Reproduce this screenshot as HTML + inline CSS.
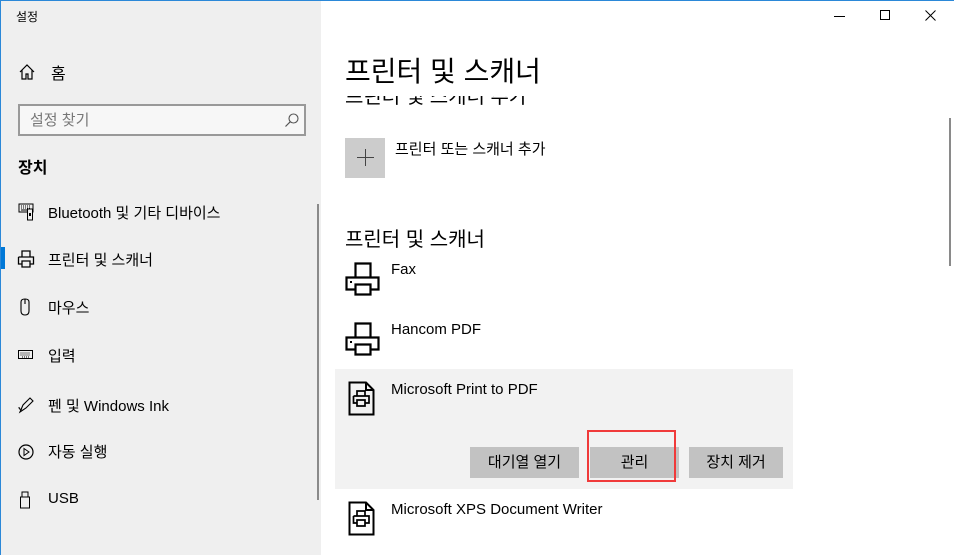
<!DOCTYPE html>
<html><head><meta charset="utf-8">
<style>
*{margin:0;padding:0;box-sizing:border-box}
body{width:954px;height:555px;overflow:hidden;background:#fff;font-family:"Liberation Sans","Noto Sans CJK KR",sans-serif;color:#000;position:relative}
.a{position:absolute;white-space:nowrap}
#side{position:absolute;left:0;top:0;width:321px;height:555px;background:#efefef;border-left:1px solid #2b88d8}
#topline{position:absolute;left:0;top:0;width:954px;height:1px;background:#2b88d8}
.nav{font-size:15px;color:#000}
.btn{position:absolute;background:#c2c2c2;font-size:15px;text-align:center;line-height:31px;height:31px}
</style></head><body>
<div id="side">
<div class="a" style="left:15px;top:8px;font-size:12px">설정</div>
<svg class="a" style="left:17px;top:63px" width="18" height="18" viewBox="0 0 18 18"><path d="M2 9 L9 2 L16 9 M4 7 V16 H8 V11 H10 V16 H14 V7" fill="none" stroke="#000" stroke-width="1.2"/></svg>
<div class="a nav" style="left:50px;top:60px;font-size:16px">홈</div>
<div class="a" style="left:17px;top:104px;width:288px;height:32px;border:2px solid #999;background:#f7f7f7"></div>
<div class="a" style="left:29px;top:109px;font-size:15px;color:#777">설정 찾기</div>
<svg class="a" style="left:283px;top:112px" width="16" height="16" viewBox="0 0 16 16"><circle cx="9.5" cy="6.5" r="4.5" fill="none" stroke="#555" stroke-width="1.1"/><path d="M6.3 9.7 L1.5 14.5" stroke="#555" stroke-width="1.2"/></svg>
<div class="a" style="left:17px;top:154px;font-size:16px;font-weight:bold">장치</div>
<svg class="a" style="left:17px;top:203px" width="18" height="18" viewBox="0 0 18 18"><rect x="1" y="1" width="14" height="8" fill="none" stroke="#000"/><path d="M3 3h1M5 3h1M7 3h1M9 3h1M11 3h1M3 5h1M5 5h1M7 5h1M9 5h1M11 5h1M3 7h8" stroke="#000"/><rect x="9.5" y="6" width="5" height="11" fill="#efefef" stroke="#000"/><rect x="11" y="10" width="2" height="3" fill="#000"/></svg>
<div class="a nav" style="left:47px;top:202px">Bluetooth 및 기타 디바이스</div>
<div class="a" style="left:0;top:247px;width:4px;height:22px;background:#0078d7"></div>
<svg class="a" style="left:16px;top:249px" width="20" height="20" viewBox="0 0 20 20"><path d="M5 8V2H13V8M1.5 8H16.5V15H13M5 15H1.5V8M5 12H13V18H5Z" fill="none" stroke="#000" stroke-width="1.3"/></svg>
<div class="a nav" style="left:47px;top:249px">프린터 및 스캐너</div>
<svg class="a" style="left:17px;top:298px" width="14" height="20" viewBox="0 0 14 20"><path d="M3 4 Q3 1 7 1 Q11 1 11 4 V13 Q11 17 7 17 Q3 17 3 13 Z M7 1 V6" fill="none" stroke="#000" stroke-width="1.1"/></svg>
<div class="a nav" style="left:47px;top:297px">마우스</div>
<svg class="a" style="left:17px;top:349px" width="16" height="12" viewBox="0 0 16 12"><rect x="0.5" y="1.5" width="14" height="8" fill="none" stroke="#000"/><path d="M2.5 4h10M2.5 6h10M4 8h7" stroke="#000" stroke-dasharray="1 1"/></svg>
<div class="a nav" style="left:47px;top:345px">입력</div>
<svg class="a" style="left:16px;top:396px" width="18" height="18" viewBox="0 0 18 18"><path d="M3 16 L6 9 L13 2 L16 5 L9 12 Z M5 13 Q2 14 2 11" fill="none" stroke="#000" stroke-width="1.1"/></svg>
<div class="a nav" style="left:47px;top:395px">펜 및 Windows Ink</div>
<svg class="a" style="left:16px;top:443px" width="18" height="18" viewBox="0 0 18 18"><circle cx="9" cy="9" r="7" fill="none" stroke="#000" stroke-width="1.2"/><path d="M7 5.5 L12 9 L7 12.5 Z" fill="none" stroke="#000"/></svg>
<div class="a nav" style="left:47px;top:441px">자동 실행</div>
<svg class="a" style="left:18px;top:491px" width="12" height="18" viewBox="0 0 12 18"><rect x="3" y="1" width="6" height="5" fill="none" stroke="#000"/><rect x="1.5" y="6" width="9" height="11" fill="none" stroke="#000"/></svg>
<div class="a nav" style="left:47px;top:490px">USB</div>
<div class="a" style="left:316px;top:204px;width:2px;height:296px;background:#8a8a8a"></div>
</div>
<div id="topline"></div>
<div class="a" style="left:834px;top:16px;width:11px;height:1px;background:#000"></div>
<div class="a" style="left:880px;top:10px;width:10px;height:10px;border:1px solid #000"></div>
<svg class="a" style="left:925px;top:10px" width="11" height="11"><path d="M0.5 0.5L10.5 10.5M10.5 0.5L0.5 10.5" stroke="#000"/></svg>
<div class="a" style="left:949px;top:118px;width:2px;height:148px;background:#8a8a8a"></div>
<div class="a" style="left:345px;top:80px;font-size:20px;color:#000">프린터 및 스캐너 추가</div>
<div class="a" style="left:322px;top:40px;width:620px;height:56px;background:#fff"></div>
<div class="a" style="left:345px;top:50px;font-size:28px">프린터 및 스캐너</div>
<div class="a" style="left:345px;top:138px;width:40px;height:40px;background:#ccc"></div>
<div class="a" style="left:357px;top:157px;width:17px;height:1px;background:#444"></div>
<div class="a" style="left:365px;top:149px;width:1px;height:17px;background:#444"></div>
<div class="a" style="left:395px;top:138px;font-size:15px">프린터 또는 스캐너 추가</div>
<div class="a" style="left:345px;top:223px;font-size:20px">프린터 및 스캐너</div>
<svg class="a" style="left:345px;top:262px" width="35" height="34" viewBox="0 0 35 34"><path d="M10.5 15.5V1.5H25.5V15.5M10.5 27.5H1.5V15.5H33.5V27.5H25.5M10.5 22.5H25.5V32.5H10.5Z" fill="none" stroke="#000" stroke-width="2.2"/><rect x="5" y="19" width="2" height="2" fill="#000"/></svg>
<div class="a" style="left:391px;top:261px;font-size:15px">Fax</div>
<svg class="a" style="left:345px;top:322px" width="35" height="34" viewBox="0 0 35 34"><path d="M10.5 15.5V1.5H25.5V15.5M10.5 27.5H1.5V15.5H33.5V27.5H25.5M10.5 22.5H25.5V32.5H10.5Z" fill="none" stroke="#000" stroke-width="2.2"/><rect x="5" y="19" width="2" height="2" fill="#000"/></svg>
<div class="a" style="left:391px;top:321px;font-size:15px">Hancom PDF</div>
<div class="a" style="left:335px;top:369px;width:458px;height:120px;background:#f2f2f2"></div>
<svg class="a" style="left:348px;top:381px" width="28" height="35" viewBox="0 0 28 35"><path d="M1.5 1.5H18L25.5 9V33.5H1.5Z M18 1.5V9H25.5" fill="none" stroke="#000" stroke-width="2"/><path d="M9 15V10H17V15M5.5 15H21V22H17M9 22H5.5V15M9 19H17V25H9Z" fill="none" stroke="#000" stroke-width="1.7"/></svg>
<div class="a" style="left:391px;top:381px;font-size:15px">Microsoft Print to PDF</div>
<div class="btn" style="left:470px;top:447px;width:109px">대기열 열기</div>
<div class="btn" style="left:590px;top:447px;width:89px">관리</div>
<div class="btn" style="left:689px;top:447px;width:94px">장치 제거</div>
<div class="a" style="left:587px;top:430px;width:89px;height:52px;border:2px solid #f03a3a"></div>
<svg class="a" style="left:348px;top:501px" width="28" height="35" viewBox="0 0 28 35"><path d="M1.5 1.5H18L25.5 9V33.5H1.5Z M18 1.5V9H25.5" fill="none" stroke="#000" stroke-width="2"/><path d="M9 15V10H17V15M5.5 15H21V22H17M9 22H5.5V15M9 19H17V25H9Z" fill="none" stroke="#000" stroke-width="1.7"/></svg>
<div class="a" style="left:391px;top:501px;font-size:15px">Microsoft XPS Document Writer</div>
</body></html>
